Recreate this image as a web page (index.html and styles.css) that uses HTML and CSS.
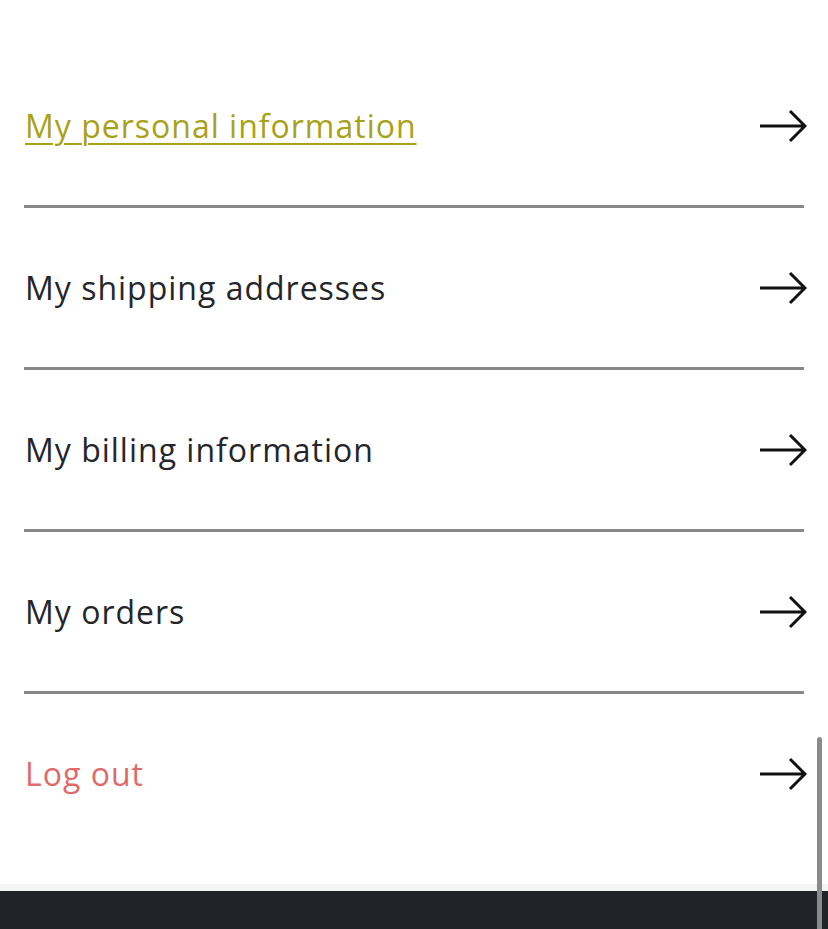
FILE: index.html
```
<!DOCTYPE html>
<html lang="en">
<head>
<meta charset="utf-8">
<title>Account</title>
<link rel="stylesheet" href="styles.css">
</head>
<body>
<main class="account">
  <nav class="menu">
    <a class="item item-active" href="#"><span class="label">My personal information</span><svg class="arrow" viewBox="0 0 48 34" width="48" height="34"><path d="M1 17H45M31 2L46 17L31 32"/></svg></a>
    <a class="item" href="#"><span class="label">My shipping addresses</span><svg class="arrow" viewBox="0 0 48 34" width="48" height="34"><path d="M1 17H45M31 2L46 17L31 32"/></svg></a>
    <a class="item" href="#"><span class="label">My billing information</span><svg class="arrow" viewBox="0 0 48 34" width="48" height="34"><path d="M1 17H45M31 2L46 17L31 32"/></svg></a>
    <a class="item" href="#"><span class="label">My orders</span><svg class="arrow" viewBox="0 0 48 34" width="48" height="34"><path d="M1 17H45M31 2L46 17L31 32"/></svg></a>
    <a class="item item-logout" href="#"><span class="label">Log out</span><svg class="arrow" viewBox="0 0 48 34" width="48" height="34"><path d="M1 17H45M31 2L46 17L31 32"/></svg></a>
  </nav>
</main>
<div class="footer-strip"></div>
<footer class="footer"></footer>
<div class="scrollbar"></div>
</body>
</html>
```
FILE: styles.css
```
html, body {
  margin: 0;
  padding: 0;
  background: #ffffff;
  height: 100%;
  overflow: hidden;
}
body {
  font-family: "Open Sans", "Noto Sans", sans-serif;
  color: #24262b;
}
.account {
  padding: 46px 24px 31px;
}
.menu {
  display: flex;
  flex-direction: column;
}
.item {
  display: flex;
  align-items: center;
  justify-content: space-between;
  height: 159px;
  border-bottom: 3px solid #888888;
  text-decoration: none;
  color: #24262b;
  font-size: 32px;
  line-height: 40px;
  letter-spacing: 1px;
}
.item:last-child {
  border-bottom: none;
}
.item-active .label {
  color: #a9a218;
  text-decoration: underline;
  text-decoration-thickness: 2px;
  text-underline-offset: 5px;
}
.item-logout .label {
  color: #e06a6a;
}
.label {
  padding-left: 1px;
}
.arrow {
  margin-right: -3px;
  fill: none;
  stroke: #111111;
  stroke-width: 3;
}
.footer-strip {
  height: 7px;
  background: #f4f4f4;
}
.footer {
  height: 60px;
  background: #212328;
}
.scrollbar {
  position: fixed;
  right: 6px;
  top: 737px;
  bottom: 0;
  width: 5px;
  border-radius: 3px 3px 0 0;
  background: #8a8a8a;
}
```
